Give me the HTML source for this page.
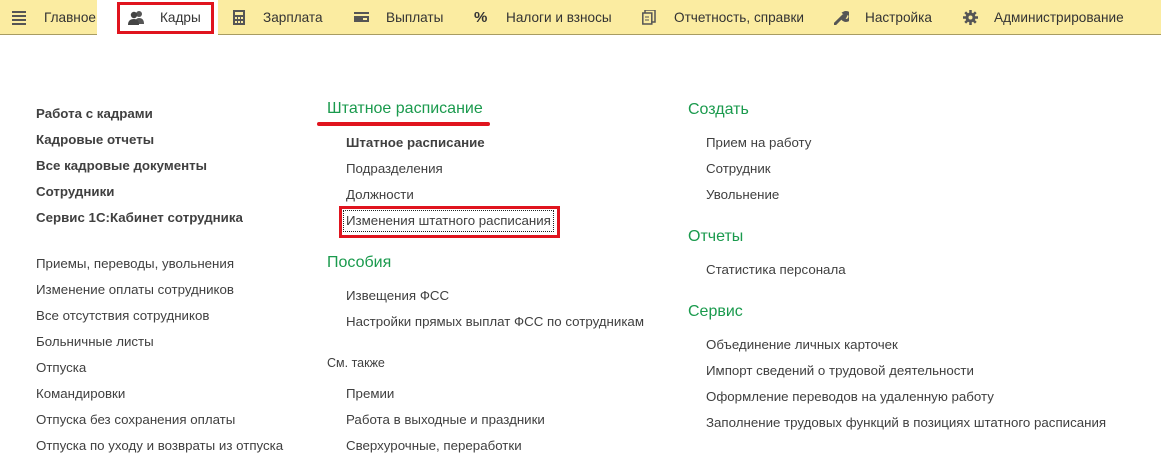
<!DOCTYPE html>
<html><head><meta charset="utf-8"><style>
*{margin:0;padding:0;box-sizing:border-box}
body{width:1161px;height:464px;background:#fff;font-family:"Liberation Sans",Arial,sans-serif;color:#404040;position:relative;overflow:hidden;font-size:13.3px}
.bar{position:absolute;left:0;top:0;width:1161px;height:35px;background:#fbeca1;border-bottom:1px solid #a89c62}
.tab{position:absolute;top:0;height:34px;line-height:35px;font-size:13.6px;color:#333}
.ic{position:absolute;top:10px}
.t{position:absolute;white-space:nowrap;line-height:16px}
.b{font-weight:bold}
.h{color:#1a9a4d;font-size:16px}
.s{font-size:12.5px}
</style></head><body>
<div class="bar"></div>
<div style="position:absolute;left:97px;top:0;width:121px;height:35px;background:#fff"></div>
<div style="position:absolute;left:117px;top:2px;width:97px;height:32px;border:3px solid #e0141e"></div>
<svg class="ic" style="left:12px" width="14" height="15"><rect x="0" y="1" width="14" height="2" fill="#555"/><rect x="0" y="5" width="14" height="2" fill="#555"/><rect x="0" y="9" width="14" height="2" fill="#555"/><rect x="0" y="13" width="14" height="2" fill="#555"/></svg>
<svg class="ic" style="left:128px" width="16" height="15"><circle cx="11" cy="4" r="3" fill="#555"/><path d="M7 14 Q7 8 11 8 Q16 8 16 14Z" fill="#555"/><circle cx="6" cy="5" r="3.2" fill="#444"/><path d="M0 15 Q0 9 6 9 Q11 9 11 15Z" fill="#444"/></svg>
<svg class="ic" style="left:233px" width="12" height="15"><rect x="0" y="0" width="12" height="15" fill="#555"/><rect x="2" y="2" width="8" height="3" fill="#fbeca1"/><g fill="#fbeca1"><rect x="2" y="7" width="2" height="2"/><rect x="5" y="7" width="2" height="2"/><rect x="8" y="7" width="2" height="2"/><rect x="2" y="11" width="2" height="2"/><rect x="5" y="11" width="2" height="2"/><rect x="8" y="11" width="2" height="2"/></g></svg>
<svg class="ic" style="left:354px" width="15" height="14"><rect x="0" y="2" width="15" height="10" fill="#555"/><rect x="0" y="4" width="15" height="2" fill="#fbeca1"/><rect x="9" y="8" width="4" height="2" fill="#fbeca1"/></svg>
<div class="tab" style="left:474px;font-weight:bold;font-size:15px">%</div>
<svg class="ic" style="left:642px" width="14" height="15"><rect x="3" y="0" width="10" height="12" fill="none" stroke="#555" stroke-width="1.5"/><rect x="0.8" y="3" width="9" height="11" fill="#fbeca1" stroke="#555" stroke-width="1.5"/><path d="M3 7h4M3 10h4" stroke="#555"/></svg>
<svg class="ic" style="left:834px" width="15" height="15"><path d="M1 14 L8 7 M8 7 A4 4 0 1 0 10 3 L12 5 L11 7 L9 6" stroke="#555" stroke-width="3" fill="none" stroke-linecap="round"/></svg>
<svg class="ic" style="left:963px" width="15" height="15"><circle cx="7.5" cy="7.5" r="5" fill="#555"/><g stroke="#555" stroke-width="2.5"><path d="M7.5 0v15M0 7.5h15M2.2 2.2l10.6 10.6M12.8 2.2L2.2 12.8"/></g><circle cx="7.5" cy="7.5" r="2" fill="#fbeca1"/></svg>
<div class="tab" style="left:44px">Главное</div>
<div class="tab" style="left:160px">Кадры</div>
<div class="tab" style="left:263px">Зарплата</div>
<div class="tab" style="left:386px">Выплаты</div>
<div class="tab" style="left:506px">Налоги и взносы</div>
<div class="tab" style="left:674px">Отчетность, справки</div>
<div class="tab" style="left:865px">Настройка</div>
<div class="tab" style="left:994px">Администрирование</div>

<div class="t b" style="left:36px;top:106px">Работа с кадрами</div>
<div class="t b" style="left:36px;top:132px">Кадровые отчеты</div>
<div class="t b" style="left:36px;top:158px">Все кадровые документы</div>
<div class="t b" style="left:36px;top:184px">Сотрудники</div>
<div class="t b" style="left:36px;top:210px">Сервис 1С:Кабинет сотрудника</div>
<div class="t" style="left:36px;top:256px">Приемы, переводы, увольнения</div>
<div class="t" style="left:36px;top:282px">Изменение оплаты сотрудников</div>
<div class="t" style="left:36px;top:308px">Все отсутствия сотрудников</div>
<div class="t" style="left:36px;top:334px">Больничные листы</div>
<div class="t" style="left:36px;top:360px">Отпуска</div>
<div class="t" style="left:36px;top:386px">Командировки</div>
<div class="t" style="left:36px;top:412px">Отпуска без сохранения оплаты</div>
<div class="t" style="left:36px;top:438px">Отпуска по уходу и возвраты из отпуска</div>

<div class="t h" style="left:327px;top:101px">Штатное расписание</div>
<div style="position:absolute;left:317px;top:122px;width:173px;height:4px;background:#e0141e;border-radius:2px"></div>
<div class="t b" style="left:346px;top:135px">Штатное расписание</div>
<div class="t" style="left:346px;top:161px">Подразделения</div>
<div class="t" style="left:346px;top:187px">Должности</div>
<div style="position:absolute;left:339px;top:206px;width:221px;height:32px;border:3px solid #e0141e"></div>
<div style="position:absolute;left:343px;top:210px;width:211px;height:22px;border:1px dotted #222"></div>
<div class="t" style="left:346px;top:213px">Изменения штатного расписания</div>
<div class="t h" style="left:327px;top:255px">Пособия</div>
<div class="t" style="left:346px;top:288px">Извещения ФСС</div>
<div class="t" style="left:346px;top:314px">Настройки прямых выплат ФСС по сотрудникам</div>
<div class="t s" style="left:327px;top:355px">См. также</div>
<div class="t" style="left:346px;top:386px">Премии</div>
<div class="t" style="left:346px;top:412px">Работа в выходные и праздники</div>
<div class="t" style="left:346px;top:438px">Сверхурочные, переработки</div>

<div class="t h" style="left:688px;top:102px">Создать</div>
<div class="t" style="left:706px;top:135px">Прием на работу</div>
<div class="t" style="left:706px;top:161px">Сотрудник</div>
<div class="t" style="left:706px;top:187px">Увольнение</div>
<div class="t h" style="left:688px;top:229px">Отчеты</div>
<div class="t" style="left:706px;top:262px">Статистика персонала</div>
<div class="t h" style="left:688px;top:304px">Сервис</div>
<div class="t" style="left:706px;top:337px">Объединение личных карточек</div>
<div class="t" style="left:706px;top:363px">Импорт сведений о трудовой деятельности</div>
<div class="t" style="left:706px;top:389px">Оформление переводов на удаленную работу</div>
<div class="t" style="left:706px;top:415px">Заполнение трудовых функций в позициях штатного расписания</div>
</body></html>
